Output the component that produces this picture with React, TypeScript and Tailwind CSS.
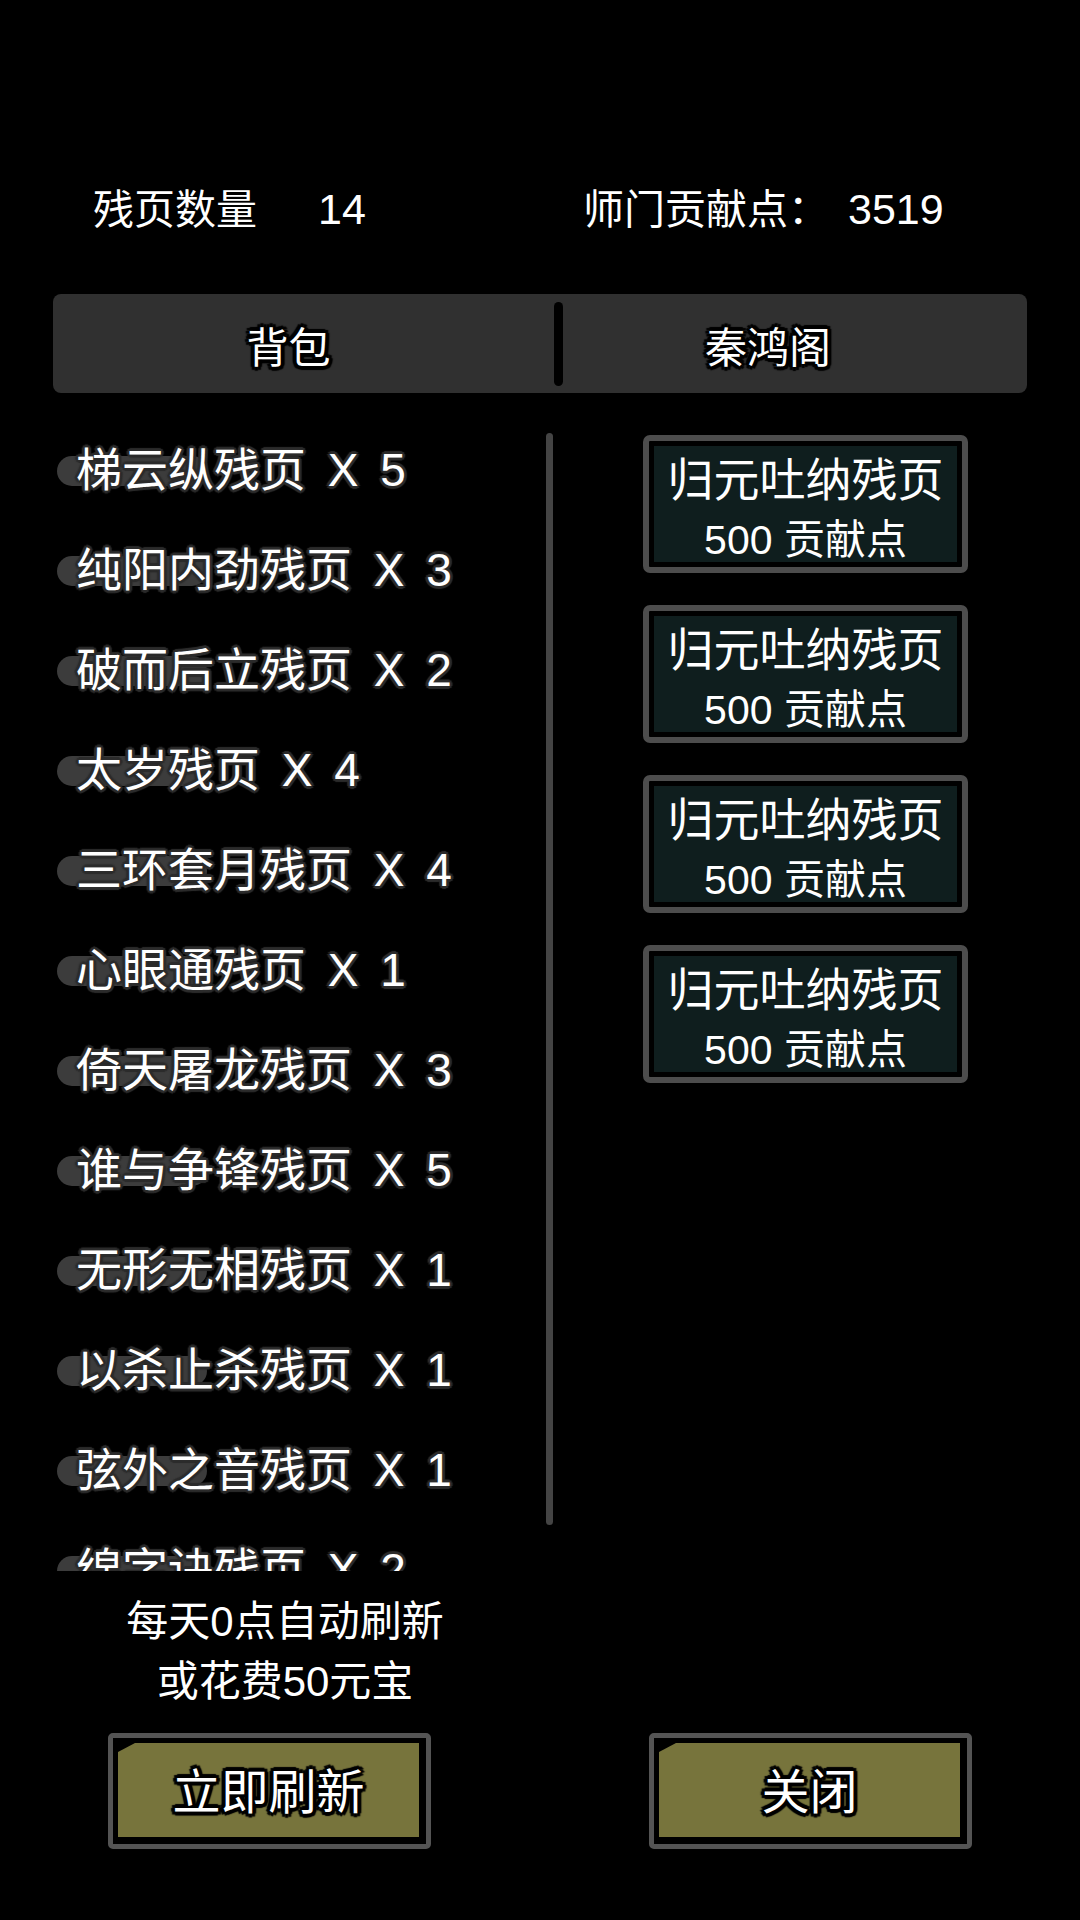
import React from 'react';

// 残页兑换界面

const items = [
  { name: '梯云纵残页', count: 5 },
  { name: '纯阳内劲残页', count: 3 },
  { name: '破而后立残页', count: 2 },
  { name: '太岁残页', count: 4 },
  { name: '三环套月残页', count: 4 },
  { name: '心眼通残页', count: 1 },
  { name: '倚天屠龙残页', count: 3 },
  { name: '谁与争锋残页', count: 5 },
  { name: '无形无相残页', count: 1 },
  { name: '以杀止杀残页', count: 1 },
  { name: '弦外之音残页', count: 1 },
  { name: '绵字诀残页', count: 2 },
];

const shop = [
  { name: '归元吐纳残页', cost: 500 },
  { name: '归元吐纳残页', cost: 500 },
  { name: '归元吐纳残页', cost: 500 },
  { name: '归元吐纳残页', cost: 500 },
];

const blackOutline =
  '[text-shadow:-3px_-3px_1px_#000,3px_-3px_1px_#000,-3px_3px_1px_#000,3px_3px_1px_#000,0_4px_1px_#000,0_-4px_1px_#000,4px_0_1px_#000,-4px_0_1px_#000]';

function ShopCard({ name, cost }: { name: string; cost: number }) {
  return (
    <div className="w-[325px] h-[138px] rounded-[7px] border-[6px] border-[#4d4d4d] bg-black p-[5px]">
      <div className="h-full bg-[#0f1e1e] flex flex-col items-center pt-[8px]">
        <p className="text-[46px] leading-[52px] h-[52px]">{name}</p>
        <p className="text-[41px] leading-[44px] h-[44px] mt-[12px]">{cost} 贡献点</p>
      </div>
    </div>
  );
}

function OliveButton({ label }: { label: string }) {
  return (
    <div className="w-[323px] h-[116px] rounded-[5px] border-[5px] border-[#545454] bg-black pl-[5px] pt-[5px] pr-[7px] pb-[7px]">
      <div className="h-full bg-[#77743c] flex items-center justify-center pt-[6px] [clip-path:polygon(0_9px,17px_0,100%_0,100%_100%,0_100%)]">
        <span className={`text-[48px] leading-none ${blackOutline}`}>{label}</span>
      </div>
    </div>
  );
}

export default function App() {
  return (
    <div className="w-[1080px] h-[1920px] bg-black text-white overflow-hidden flex flex-col pt-[189px] font-['Liberation_Sans','Noto_Sans_CJK_SC',sans-serif]">
      {/* 顶部统计 */}
      <div className="flex h-[41px] text-[41px] leading-[41px]">
        <div className="w-[583px] pl-[93px] flex items-baseline">
          <span>残页数量</span>
          <span className="ml-[61px] text-[43px]">14</span>
        </div>
        <div className="flex items-baseline">
          <span>师门贡献点：</span>
          <span className="ml-[19px] text-[43px]">3519</span>
        </div>
      </div>

      {/* 标签 */}
      <div className="mt-[64px] ml-[53px] w-[974px] h-[99px] rounded-[8px] bg-[#303030] flex items-center">
        <div className="w-[501px] flex justify-center pr-[30px] pt-[10px]">
          <span className={`text-[42px] leading-none ${blackOutline}`}>背包</span>
        </div>
        <div className="w-[9px] h-[84px] rounded-full bg-black" />
        <div className="flex-1 flex justify-center pr-[54px] pt-[10px]">
          <span className={`text-[42px] leading-none ${blackOutline}`}>秦鸿阁</span>
        </div>
      </div>

      {/* 内容 */}
      <div className="flex h-[1178px]">
        <div className="w-[546px] pl-[57px] pt-[27px] overflow-hidden">
          {items.map((it, i) => (
            <div key={i} className="relative h-[100px] flex items-center">
              <div className="absolute left-0 top-[36px] w-[150px] h-[30px] rounded-full bg-[#3c3c3c]" />
              <span className="relative pl-[19px] text-[46px] leading-[100px] whitespace-nowrap [word-spacing:9px] [text-shadow:-2px_-2px_1px_#2c2c2c,2px_-2px_1px_#2c2c2c,-2px_2px_1px_#2c2c2c,2px_2px_1px_#2c2c2c,0_3px_1px_#2c2c2c,0_-3px_1px_#2c2c2c,3px_0_1px_#2c2c2c,-3px_0_1px_#2c2c2c]">
                {it.name} X {it.count}
              </span>
            </div>
          ))}
        </div>
        <div className="w-[7px] mt-[40px] h-[1092px] rounded-full bg-[#444]" />
        <div className="pl-[90px] pt-[42px] flex flex-col gap-[32px]">
          {shop.map((s, i) => (
            <ShopCard key={i} name={s.name} cost={s.cost} />
          ))}
        </div>
      </div>

      {/* 刷新说明 */}
      <div className="mt-[21px] w-[570px] text-center text-[42px] leading-[60px]">
        <p>每天0点自动刷新</p>
        <p>或花费50元宝</p>
      </div>

      {/* 按钮 */}
      <div className="mt-[21px] pl-[108px] flex gap-[218px]">
        <OliveButton label="立即刷新" />
        <OliveButton label="关闭" />
      </div>
    </div>
  );
}
